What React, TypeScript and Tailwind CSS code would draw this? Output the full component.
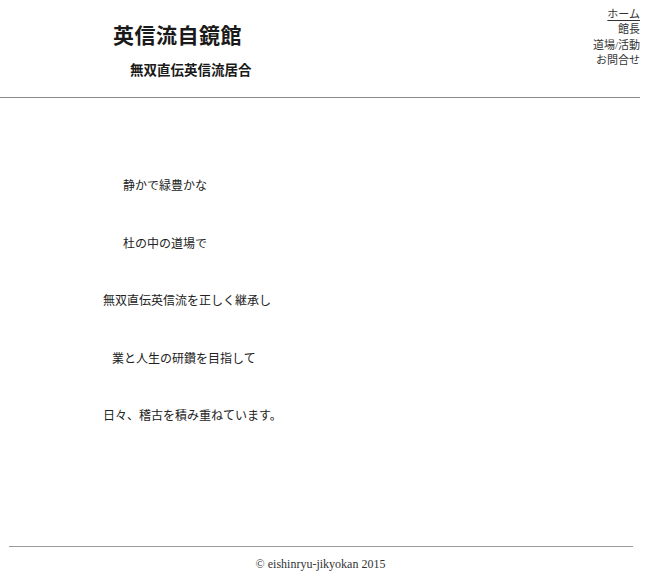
import React from "react";

const jp = { fontFamily: '"Liberation Serif", "Noto Sans CJK JP", serif' };

export default function App() {
  const lines: { t: string; pl: string }[] = [
    { t: "静かで緑豊かな", pl: "pl-[123px]" },
    { t: "杜の中の道場で", pl: "pl-[123px]" },
    { t: "無双直伝英信流を正しく継承し", pl: "pl-[103px]" },
    { t: "業と人生の研鑽を目指して", pl: "pl-[112px]" },
    { t: "日々、稽古を積み重ねています。", pl: "pl-[103px]" },
  ];
  return (
    <div className="w-[650px] h-[587px] bg-white text-[#1a1a1a] overflow-hidden" style={jp}>
      <header className="w-[640px] h-[98px] border-b border-[#8a8a8a] flex justify-between">
        <div className="flex flex-col">
          <h1 className="pl-[113px] pt-[22px] text-[21px] leading-[28px] font-bold tracking-[0.5px]">英信流自鏡館</h1>
          <h2 className="pl-[130px] pt-[12px] text-[13.5px] leading-[18px] font-bold">無双直伝英信流居合</h2>
        </div>
        <nav className="pt-[7px] flex flex-col items-end text-[11px] leading-[15.3px] text-[#333]">
          <a className="underline underline-offset-2">ホーム</a>
          <a>館長</a>
          <a>道場/活動</a>
          <a>お問合せ</a>
        </nav>
      </header>
      <main className="pt-[79px] h-[448px] flex flex-col gap-[39.5px]">
        {lines.map((l) => (
          <p key={l.t} className={`${l.pl} text-[12px] leading-[18px] text-[#222]`}>{l.t}</p>
        ))}
      </main>
      <footer className="flex flex-col">
        <div className="ml-[9px] w-[624px] border-t border-[#9a9a9a]" />
        <p className="w-[641px] text-center pt-[10px] text-[12px] leading-[14px] text-[#333]" style={{ fontFamily: '"Liberation Serif", serif' }}>
          © eishinryu-jikyokan 2015
        </p>
      </footer>
    </div>
  );
}
